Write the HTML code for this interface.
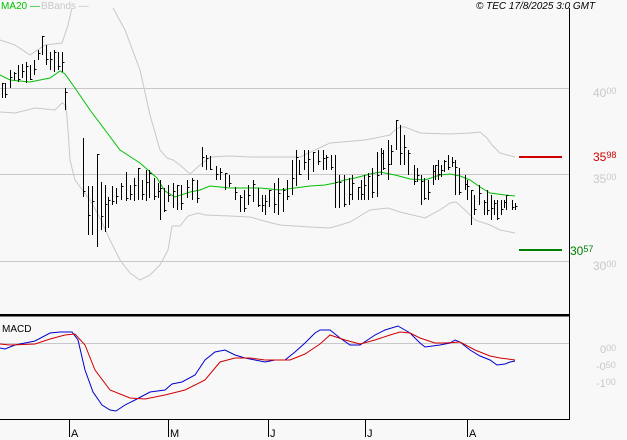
<!DOCTYPE html>
<html><head><meta charset="utf-8"><style>
html,body{margin:0;padding:0;background:#f8f8f8;}
body{width:627px;height:440px;overflow:hidden;position:relative;font-family:"Liberation Sans",sans-serif;}
svg{position:absolute;left:0;top:0}
</style></head><body>
<svg id="s" width="627" height="440" viewBox="0 0 627 440" xmlns="http://www.w3.org/2000/svg" font-family="Liberation Sans, sans-serif">
<rect width="627" height="440" fill="#f8f8f8"/>
<g stroke="#c8c8c8" stroke-width="1">
<line x1="0" y1="88.5" x2="569" y2="88.5"/>
<line x1="0" y1="174.5" x2="569" y2="174.5"/>
<line x1="0" y1="261.5" x2="569" y2="261.5"/>
<line x1="0" y1="343.5" x2="569" y2="343.5"/>
</g>
<line x1="569.5" y1="8" x2="569.5" y2="420" stroke="#000"/>
<rect x="0" y="314" width="570" height="2.5" fill="#000"/>
<line x1="0" y1="419.5" x2="570" y2="419.5" stroke="#000"/>
<g stroke="#000"><line x1="69.5" y1="420" x2="69.5" y2="437"/><line x1="168.5" y1="420" x2="168.5" y2="437"/><line x1="268.5" y1="420" x2="268.5" y2="437"/><line x1="365.5" y1="420" x2="365.5" y2="437"/><line x1="467.5" y1="420" x2="467.5" y2="437"/></g>
<g font-size="11" fill="#000"><text x="71" y="437">A</text><text x="170" y="437">M</text><text x="270" y="437">J</text><text x="367" y="437">J</text><text x="469" y="437">A</text></g>
<text x="1" y="9" font-size="10" fill="#00c000">MA20 —</text>
<text x="41" y="9" font-size="10" fill="#c8c8c8">BBands —</text>
<text x="476" y="9" font-size="10" font-style="italic" fill="#000">© TEC 17/8/2025 3:0 GMT</text>
<text x="2" y="332" font-size="10" fill="#000">MACD</text>
<g fill="#c8c8c8" font-size="12"><text x="593" y="97">40<tspan font-size="9" dy="-3">00</tspan></text>
<text x="593" y="183">35<tspan font-size="9" dy="-3">00</tspan></text>
<text x="593" y="270">30<tspan font-size="9" dy="-3">00</tspan></text>
<text x="600" y="353" font-size="11">0<tspan font-size="9" dy="-2">00</tspan></text>
<text x="596" y="370" font-size="11">-0<tspan font-size="9" dy="-2">50</tspan></text>
<text x="596" y="387" font-size="11">-1<tspan font-size="9" dy="-2">00</tspan></text></g>
<rect x="519" y="156" width="43" height="2" fill="#d00000"/>
<rect x="519" y="249" width="43" height="2" fill="#008000"/>
<text x="593" y="161" font-size="12" fill="#d00000">35<tspan font-size="9" dy="-3">98</tspan></text>
<text x="570" y="255" font-size="12" fill="#008000">30<tspan font-size="9" dy="-3">57</tspan></text>
<g fill="none" stroke="#c8c8c8" stroke-width="1">
<polyline points="0,40 15,45 30,55 45,45 62,43 68,25 72,8"/>
<polyline points="113,8 125,30 140,70 150,115 160,150 167,158 173,160 180,165 190,174 200,165 210,157 230,156 250,157 280,157 300,157 330,143 365,140 390,135 395,130 400,127 405,127 420,133 450,134 470,133 480,132 487,138 492,145 500,153 515,157"/>
<polyline points="0,112 15,113 35,108 55,110 62,103 66,105 68,130 70,160 75,180 90,200 100,218 110,240 120,260 130,273 140,280 150,275 160,265 168,250 172,226 180,226 188,216 198,213 205,215 230,216 250,217 268,222 280,225 310,227 330,228 350,222 370,210 388,208 400,212 425,218 440,210 450,203 456,202 465,210 475,220 490,225 500,230 515,233"/>
</g>
<polyline fill="none" stroke="#00c000" points="0,75 10,80 30,82 50,78 60,71 65,74 75,88 90,110 105,130 120,150 140,163 157,178 165,191 175,197 190,192 200,190 210,186 220,187 230,188 260,188 280,190 295,188 310,186 325,185 335,183 345,180 355,178 370,174 380,172 395,175 410,179 425,180 440,175 450,174 460,176 470,180 480,187 490,193 505,195 515,196"/>
<path id="bars" fill="none" stroke="#000" stroke-width="1"/>
<polyline fill="none" stroke="#0000d0" points="0,348 5,349 15,345 35,341 50,333 60,332 72,332 78,340 85,370 93,392 102,405 110,410 116,411 125,405 135,400 150,392 165,390 172,384 182,382 195,375 205,360 215,352 225,350 235,355 245,358 255,360 265,362 275,360 285,360 295,352 305,343 315,333 320,330 330,330 340,338 350,345 360,345 375,335 385,330 398,326 410,333 420,343 425,347 440,345 450,343 455,340 460,342 470,350 480,356 490,360 497,365 505,364 510,362 515,361"/>
<polyline fill="none" stroke="#d00000" points="0,344 10,345 35,344 50,339 65,335 75,334 85,345 95,370 110,390 130,398 145,399 165,395 185,390 205,380 220,362 235,358 250,358 265,360 290,360 305,354 320,344 330,335 345,340 360,344 375,340 390,335 400,332 410,333 420,338 435,343 445,343 460,342 475,350 490,356 500,358 508,359 515,360"/>
</svg>
<script>
var b=[[2,83,98],[5,83,98],[10,70,88],[14,72,80],[18,65,82],[22,64,78],[26,62,83],[30,65,80],[34,60,75],[38,50,60],[42,36,55],[46,45,65],[50,52,70],[54,50,72],[58,52,70],[62,52,72],[65,88,110],[83,138,197],[88,186,235],[92,186,235],[97,154,247],[101,182,230],[105,185,232],[108,197,228],[112,186,205],[116,188,204],[121,183,200],[126,172,201],[130,185,200],[134,178,201],[138,168,200],[142,180,200],[146,170,201],[149,170,198],[154,178,200],[158,183,198],[160,180,220],[164,188,212],[168,185,202],[173,183,208],[177,185,210],[181,185,210],[187,180,198],[192,178,200],[197,180,203],[202,147,167],[206,155,170],[210,156,170],[216,166,180],[220,168,180],[225,173,190],[229,175,187],[235,187,200],[240,195,212],[244,190,212],[248,185,205],[253,180,202],[258,188,207],[262,195,212],[265,195,215],[269,190,207],[274,183,213],[278,178,215],[283,188,212],[287,180,200],[292,160,195],[296,150,186],[299,160,175],[304,150,170],[308,150,180],[313,152,172],[318,150,165],[323,150,170],[326,155,170],[331,155,170],[335,155,208],[339,175,208],[344,175,207],[349,178,205],[352,175,200],[358,187,200],[361,180,200],[364,175,200],[368,173,200],[372,168,198],[377,152,197],[381,148,175],[383,150,170],[388,140,180],[391,145,165],[396,120,150],[400,125,165],[404,135,165],[408,150,175],[414,165,185],[417,168,182],[421,175,205],[424,178,200],[428,180,200],[433,165,185],[435,165,180],[438,160,180],[441,165,177],[444,160,172],[448,155,170],[452,157,167],[455,160,195],[459,168,195],[465,175,190],[467,180,200],[471,190,225],[474,195,215],[479,185,205],[484,200,215],[487,190,215],[491,195,220],[494,200,215],[497,200,220],[501,200,215],[504,200,208],[506,195,210],[512,200,210],[515,203,210]];
var d="";b.forEach(function(r,i){var x=r[0]+0.5,c=Math.round(r[1]+(r[2]-r[1])*((i*37)%10)/10)+0.5;d+="M"+x+" "+r[1]+"V"+r[2]+"M"+x+" "+c+"h2";});
document.getElementById("bars").setAttribute("d",d);
</script>
</body></html>
